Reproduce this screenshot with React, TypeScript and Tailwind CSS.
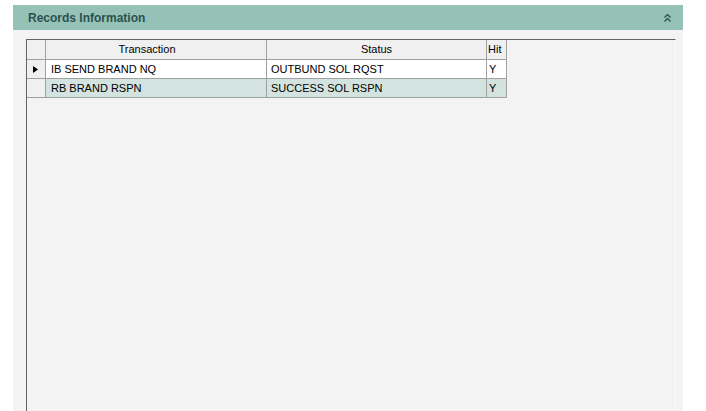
import React from "react";

const rows = [
  { t: "IB SEND BRAND NQ", s: "OUTBUND SOL RQST", h: "Y", current: true },
  { t: "RB BRAND RSPN", s: "SUCCESS SOL RSPN", h: "Y", current: false },
];

export default function App() {
  return (
    <div
      className="w-[706px] h-[411px] bg-white pl-[13px] pt-[5px] overflow-hidden"
      style={{ fontFamily: '"Liberation Sans", Arial, sans-serif' }}
    >
      <div className="w-[670px] h-[406px] flex flex-col">
        <div className="h-[25px] bg-[#96c1b6] flex items-center justify-between pl-[15px] pr-[12px] shrink-0">
          <span className="text-[12px] font-bold text-[#2b524e] leading-none">Records Information</span>
          <svg width="7" height="8" viewBox="0 0 7 8" className="mt-[1px]">
            <path d="M0.5 3.5 L3.5 0.5 L6.5 3.5" fill="none" stroke="#2d4f4b" strokeWidth="1.3" />
            <path d="M0.5 7.5 L3.5 4.5 L6.5 7.5" fill="none" stroke="#2d4f4b" strokeWidth="1.3" />
          </svg>
        </div>
        <div className="flex-1 bg-[#f3f3f3] pl-[13px] pr-[7px] pt-[9px]">
          <div className="h-full border-t border-l border-[#646464] border-r border-r-[#fbfbfb] text-[11px] text-black leading-none">
            <div className="flex h-[20px] w-[480px]">
              <div className="w-[19px] bg-[#f0f0f0] border-r border-b border-[#a0a0a0]" />
              <div className="w-[221px] bg-[#f0f0f0] border-r border-b border-[#a0a0a0] flex items-center justify-center pr-[18px]">
                Transaction
              </div>
              <div className="w-[220px] bg-[#f0f0f0] border-r border-b border-[#a0a0a0] flex items-center justify-center">
                Status
              </div>
              <div className="w-[20px] bg-[#f0f0f0] border-r border-b border-[#a0a0a0] flex items-center pl-[1px]">
                Hit
              </div>
            </div>
            {rows.map((r, i) => (
              <div key={i} className="flex h-[19px] w-[480px]">
                <div className="w-[19px] bg-[#f0f0f0] border-r border-b border-[#a0a0a0] flex items-center pl-[6px]">
                  {r.current && (
                    <svg width="5" height="7" viewBox="0 0 5 7">
                      <path d="M0 0 L5 3.5 L0 7 Z" fill="#000" />
                    </svg>
                  )}
                </div>
                <div
                  className={`w-[221px] border-r border-b border-[#a0a0a0] flex items-center pl-[5px] ${
                    r.current ? "bg-white" : "bg-[#d3e3df]"
                  }`}
                >
                  {r.t}
                </div>
                <div
                  className={`w-[220px] border-r border-b border-[#a0a0a0] flex items-center pl-[4px] ${
                    r.current ? "bg-white" : "bg-[#d3e3df]"
                  }`}
                >
                  {r.s}
                </div>
                <div
                  className={`w-[20px] border-r border-b border-[#a0a0a0] flex items-center pl-[2px] ${
                    r.current ? "bg-white" : "bg-[#d3e3df]"
                  }`}
                >
                  {r.h}
                </div>
              </div>
            ))}
          </div>
        </div>
      </div>
    </div>
  );
}
